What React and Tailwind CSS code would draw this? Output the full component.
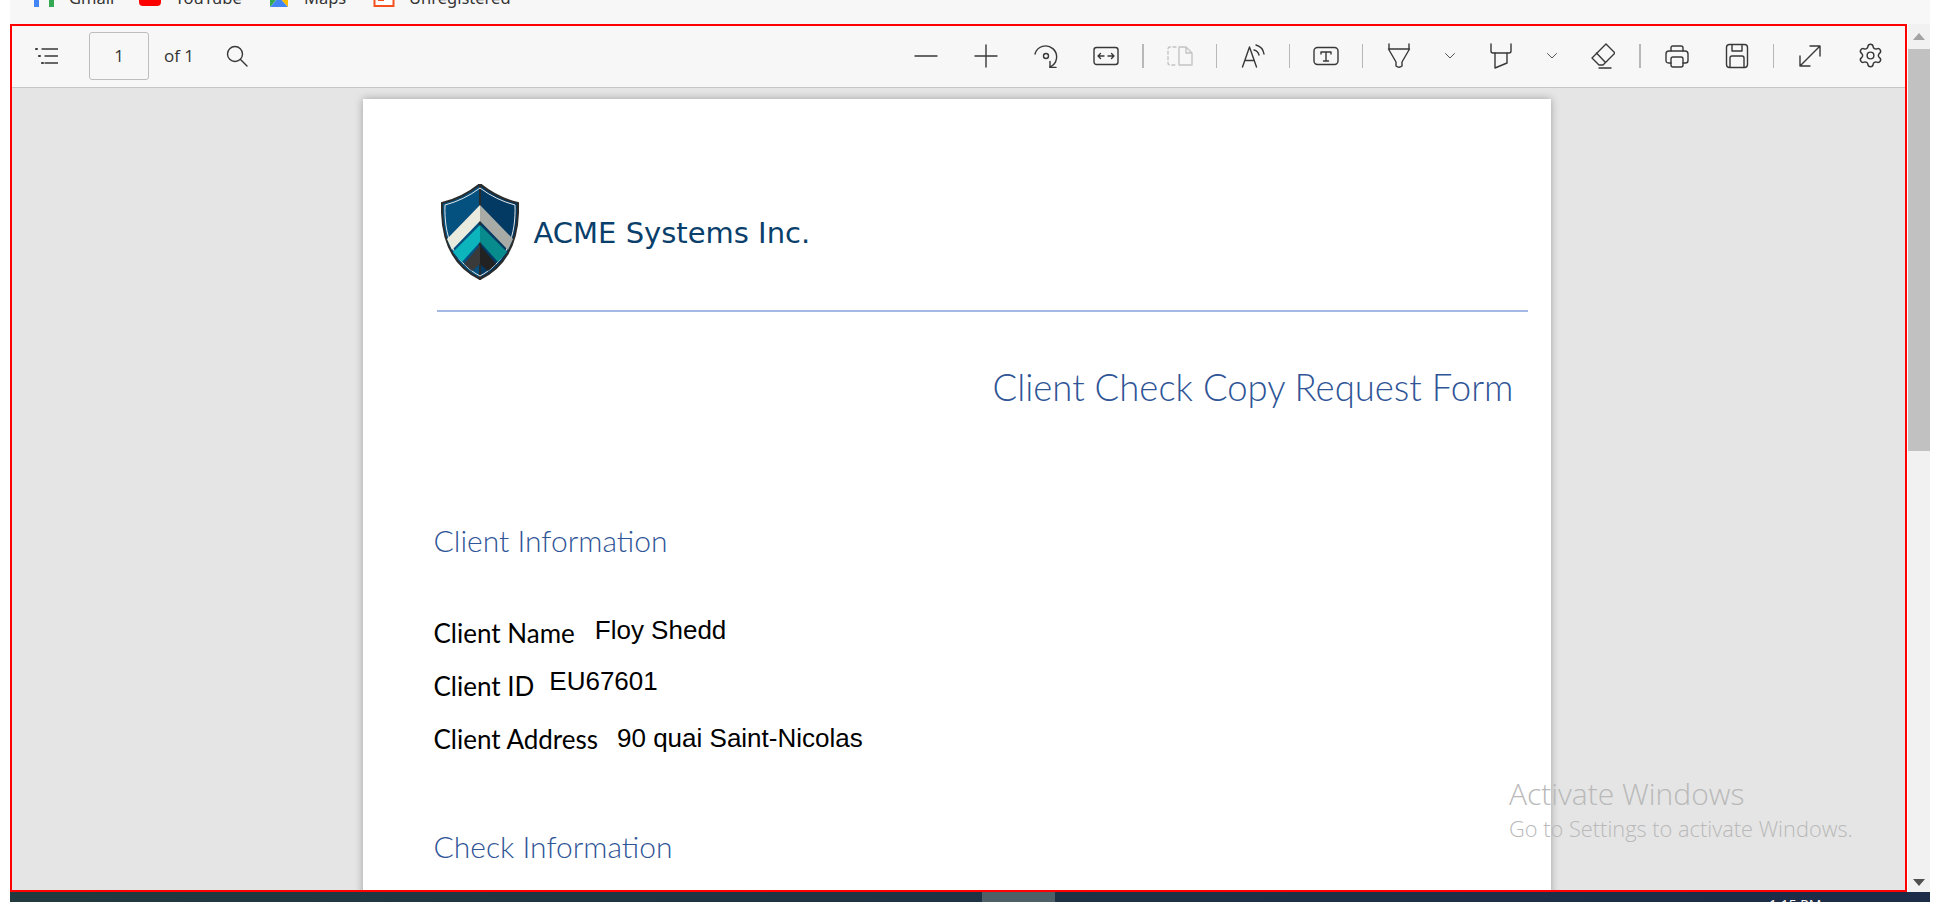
import { Settings } from "lucide-react";

function Icon({ children, w = 24, h = 24, className = "text-[#383838]" }) {
  return (
    <svg
      width={w}
      height={h}
      viewBox={`0 0 ${w} ${h}`}
      fill="none"
      stroke="currentColor"
      strokeWidth="1.4"
      strokeLinecap="round"
      strokeLinejoin="round"
      className={className}
    >
      {children}
    </svg>
  );
}

function Btn({ children, className = "w-12" }) {
  return <div className={`h-8 flex items-center justify-center shrink-0 ${className}`}>{children}</div>;
}

function Sep({ className = "w-px" }) {
  return <div className={`h-6 bg-[#b8b8b8] shrink-0 ${className}`} />;
}

function Chevron() {
  return (
    <Btn className="w-[30px]">
      <Icon w={12} h={8} className="text-[#555]">
        <path d="M1.5 1.5 L6 6 L10.5 1.5" strokeWidth="1" />
      </Icon>
    </Btn>
  );
}

function Shield() {
  return (
    <svg width="78" height="96" viewBox="0 0 78 96" className="shrink-0">
      <path d="M39 0 Q22 14 1 19 C0 50 8 80 39 95 Z" fill="#04507f" stroke="#2b2b2b" strokeWidth="2" />
      <path d="M39 0 Q56 14 77 19 C78 50 70 80 39 95 Z" fill="#033a63" stroke="#2b2b2b" strokeWidth="2" />
      <path d="M39 4 Q23 16 4 21 C3 50 11 77 39 92 C67 77 75 50 74 21 Q55 16 39 4 Z" fill="none" stroke="#e8e8e8" strokeWidth="1" />
      <path d="M39 21 L6 55 L11 66 L39 37 Z" fill="#e9ebdf" />
      <path d="M39 21 L72 55 L67 66 L39 37 Z" fill="#a9aba6" />
      <path d="M39 41 L12 68 L21 78 L39 58 Z" fill="#0cb5bb" />
      <path d="M39 41 L66 68 L57 78 L39 58 Z" fill="#078b8c" />
      <path d="M39 61 L23 80 L31 87 L39 80 Z" fill="#3a3a3a" />
      <path d="M39 61 L55 80 L47 87 L39 80 Z" fill="#222222" />
    </svg>
  );
}

function Row({ label, value, gap, lift }) {
  return (
    <div className={`flex items-end h-[53px] ${gap}`}>
      <span className="font-['Lato'] text-[26px] text-black">{label}</span>
      <span className={`font-['Liberation_Sans'] text-[26px] text-black ${lift}`}>{value}</span>
    </div>
  );
}

function Bookmark({ icon, label, className }) {
  return (
    <div className={`flex items-center gap-[14px] ${className}`}>
      <svg width="22" height="18" viewBox="0 0 22 18" className="shrink-0">
        {icon}
      </svg>
      <span className="font-['Noto_Sans'] text-[16.5px] text-[#333]">{label}</span>
    </div>
  );
}

export default function App() {
  return (
    <div className="relative w-[1942px] h-[916px] overflow-hidden bg-white flex flex-col pl-[10px] pr-[12px]">
      {/* browser bookmarks, cut off by the screenshot */}
      <div className="h-6 shrink-0 bg-[#f7f7f7] overflow-hidden flex items-start pl-[23px]">
        <div className="flex -mt-[12px] h-5 items-center">
          <Bookmark
            label="Gmail"
            className="w-[106px]"
            icon={
              <>
                <rect x="1" y="2" width="5" height="16" fill="#4285f4" />
                <rect x="16" y="2" width="5" height="16" fill="#34a853" />
                <path d="M6 2 L11 8 L16 2 Z" fill="#ea4335" />
              </>
            }
          />
          <Bookmark
            label="YouTube"
            className="w-[129px]"
            icon={<rect x="0" y="1" width="22" height="16" rx="4" fill="#ff0000" />}
          />
          <Bookmark
            label="Maps"
            className="w-[105px]"
            icon={
              <>
                <path d="M2 18 L11 8 L20 18 Z" fill="#4285f4" />
                <path d="M2 18 L2 9 L8 11 Z" fill="#34a853" />
                <path d="M11 8 L20 18 L20 4 Z" fill="#fbbc04" />
              </>
            }
          />
          <Bookmark
            label="Unregistered"
            icon={
              <>
                <rect x="1.5" y="1" width="19" height="16" fill="#fff" stroke="#f4511e" strokeWidth="2" />
                <path d="M6 4 V11 H10 V4 M13 4 V11" fill="none" stroke="#f4511e" strokeWidth="2" />
              </>
            }
          />
        </div>
      </div>

      <div className="flex flex-1 min-h-0">
        {/* pdf viewer */}
        <div className="w-[1897px] border-2 border-[#ff0000] flex flex-col min-h-0">
          <div className="h-[62px] shrink-0 bg-[#f7f7f7] border-b border-[#c6c6c6] flex items-center pb-[2px]">
            <div className="w-[46px] flex justify-end shrink-0">
              <Icon>
                <path d="M8 5 H24 M11 12 H24 M11 19 H24" />
                <path d="M2 5 H3 M5 12 H6 M8 19 H9" strokeWidth="2" />
              </Icon>
            </div>
            <div className="ml-[31px] w-[60px] h-[48px] border border-[#bdbdbd] rounded-[3px] flex items-center justify-center font-['Open_Sans'] text-[17px] text-[#333] shrink-0">
              1
            </div>
            <span className="ml-[15px] font-['Open_Sans'] text-[17px] text-[#333]">of 1</span>
            <div className="ml-[31px]">
              <Icon>
                <circle cx="10" cy="10" r="7.5" />
                <path d="M15.5 15.5 L22 22" />
              </Icon>
            </div>

            <div className="ml-auto pr-[11px] flex items-center gap-3">
              <Btn><Icon><path d="M1 12 H23" /></Icon></Btn>
              <Btn><Icon><path d="M12 1 V23 M1 12 H23" /></Icon></Btn>
              <Btn>
                <Icon>
                  <path d="M1 10 A11 11 0 1 1 16 23" />
                  <path d="M16 17.5 V23.5 H22" />
                  <circle cx="12" cy="12" r="2.5" />
                </Icon>
              </Btn>
              <Btn>
                <Icon w={26}>
                  <rect x="1" y="3.5" width="24" height="17" rx="2.5" />
                  <path d="M5 12 H11 M5 12 L7.5 9.5 M5 12 L7.5 14.5 M15 12 H21 M21 12 L18.5 9.5 M21 12 L18.5 14.5" />
                </Icon>
              </Btn>
              <Sep className="w-[2px]" />
              <Btn>
                <Icon w={26} className="text-[#c4c4c4]">
                  <path d="M9 3 H3 Q1 3 1 5 V19 Q1 21 3 21 H9" strokeDasharray="3 2.5" />
                  <path d="M12 3 H19 L25 9 V21 H12 Z M19 3 V9 H25" />
                </Icon>
              </Btn>
              <Sep />
              <Btn>
                <Icon>
                  <path d="M1.5 23 L8.5 3 L15.5 23 M4 16.5 H13" />
                  <path d="M13 6 Q17 7 18 11 M15 1 Q22 3 23 10" />
                </Icon>
              </Btn>
              <Sep />
              <Btn>
                <Icon w={26}>
                  <rect x="1" y="3.5" width="24" height="17" rx="3.5" />
                  <path d="M8 8 H18 M8 8 V10 M18 8 V10 M13 8 V17 M10.5 17 H15.5" />
                </Icon>
              </Btn>
              <Sep />
              <Btn>
                <Icon h={26}>
                  <path d="M1.5 6 H22.5 L15 19 V23 Q12 25.5 9 23 V19 Z M2 1 V6 M22 1 V6" />
                </Icon>
              </Btn>
              <Chevron />
              <Btn>
                <Icon h={26}>
                  <path d="M2 1 V8 Q2 10 4 10 H20 Q22 10 22 8 V1" />
                  <path d="M6 10 V25 L18 20 V10" />
                </Icon>
              </Btn>
              <Chevron />
              <Btn>
                <Icon h={26}>
                  <path d="M15 1 L24 10 L12 22 H8 L1 15 Z M5.5 10 L14 19" />
                  <path d="M8 25 H20" />
                </Icon>
              </Btn>
              <Sep className="w-[2px]" />
              <Btn>
                <Icon>
                  <path d="M6 7 V4 Q6 2 8 2 H16 Q18 2 18 4 V7" />
                  <path d="M6 19 H3.5 Q1 19 1 16.5 V10 Q1 7 4 7 H20 Q23 7 23 10 V16.5 Q23 19 20.5 19 H18" />
                  <rect x="6" y="13" width="12" height="10" rx="2" />
                </Icon>
              </Btn>
              <Btn>
                <Icon h={26}>
                  <rect x="1.5" y="1.5" width="21" height="23" rx="3" />
                  <path d="M7 2 V8 H17 V2 M5 24 V15 Q5 13 7 13 H17 Q19 13 19 15 V24" />
                </Icon>
              </Btn>
              <Sep />
              <Btn>
                <Icon>
                  <path d="M2 22 L22 2 M12 2 H22 V12 M2 12 V22 H12" />
                </Icon>
              </Btn>
              <Btn>
                <Settings size={27} strokeWidth={1.3} className="text-[#383838]" />
              </Btn>
            </div>
          </div>

          <div className="flex-1 min-h-0 overflow-hidden bg-[#e5e5e5] flex justify-center pt-[11px] pr-[4px]">
            {/* pdf page */}
            <div className="w-[1188px] h-[1540px] shrink-0 bg-white shadow-[0_0_8px_rgba(0,0,0,0.3)] pt-[85px] pl-[74px] pr-[23px]">
              <div className="flex items-center gap-[15px] pl-[4px]">
                <Shield />
                <span className="font-['DejaVu_Sans'] text-[29px] text-[#0a3f6b] pt-[4px]">ACME Systems Inc.</span>
              </div>
              <div className="mt-[30px] h-[2px] bg-[#a3b8e2]" />
              <h1 className="mt-[47px] pr-[14px] text-right font-['Lato'] font-light text-[36.5px] leading-[56px] text-[#2f5597]">
                Client Check Copy Request Form
              </h1>
              <h2 className="mt-[103px] -ml-[3px] font-['Lato'] font-light text-[30px] leading-[44px] text-[#2f5597]">
                Client Information
              </h2>
              <div className="mt-[38px] -ml-[3px]">
                <Row label="Client Name" value="Floy Shedd" gap="gap-[20px]" lift="mb-[3.5px]" />
                <Row label="Client ID" value="EU67601" gap="gap-[15px]" lift="mb-[5px]" />
                <Row label="Client Address" value="90 quai Saint-Nicolas" gap="gap-[19px]" lift="mb-[1px]" />
              </div>
              <h2 className="mt-[65px] -ml-[3px] font-['Lato'] font-light text-[30px] leading-[44px] text-[#2f5597]">
                Check Information
              </h2>
            </div>
          </div>
        </div>

        {/* scrollbar */}
        <div className="ml-px w-[22px] bg-[#f1f1f1] flex flex-col items-center">
          <div className="h-[25px] flex items-center">
            <div className="w-0 h-0 border-x-[6px] border-x-transparent border-b-[7px] border-b-[#a3a3a3]" />
          </div>
          <div className="w-full h-[402px] bg-[#c1c1c1]" />
          <div className="mt-auto h-[20px] flex items-center">
            <div className="w-0 h-0 border-x-[6px] border-x-transparent border-t-[7px] border-t-[#505050]" />
          </div>
        </div>
      </div>

      {/* windows taskbar, cut off */}
      <div className="h-[10px] shrink-0 mb-[14px] bg-gradient-to-r from-[#22393f] to-[#1c2b48] overflow-hidden flex">
        <div className="ml-[972px] w-[73px] bg-[#4f5f68]" />
        <span className="ml-[714px] mt-[6px] font-['Open_Sans'] text-[14px] leading-none text-white">1:15 PM</span>
      </div>

      {/* activation watermark */}
      <div className="absolute left-[1509px] top-[776px] font-['Open_Sans'] font-light text-[#b9b9b9]">
        <div className="text-[30px] leading-[36px]">Activate Windows</div>
        <div className="text-[21.8px] leading-[28px] mt-[3px]">Go to Settings to activate Windows.</div>
      </div>
    </div>
  );
}
